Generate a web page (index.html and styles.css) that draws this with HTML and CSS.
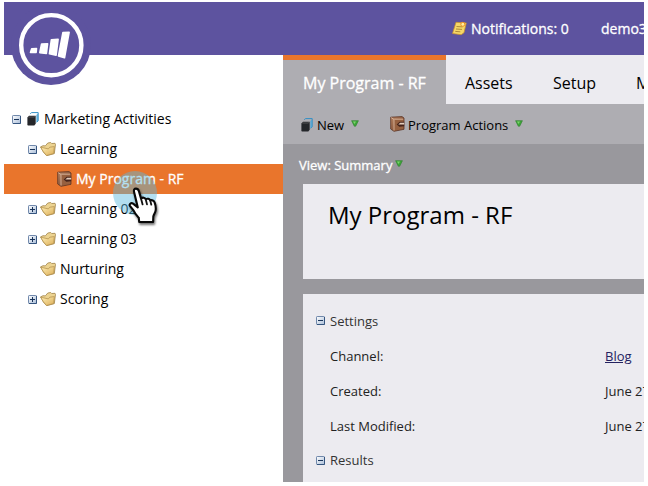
FILE: index.html
```html
<!DOCTYPE html>
<html lang="en">
<head>
<meta charset="utf-8">
<title>My Program - RF</title>
<link rel="stylesheet" href="styles.css">
</head>
<body>
<svg class="defs" width="0" height="0" aria-hidden="true">
  <defs>
    <linearGradient id="gFolder" x1="0" y1="0" x2="1" y2="1"><stop offset="0" stop-color="#fff0b8"/><stop offset="1" stop-color="#dcae58"/></linearGradient>
    <linearGradient id="gBox" x1="0" y1="0" x2="1" y2="1"><stop offset="0" stop-color="#fff"/><stop offset="1" stop-color="#a9bdd8"/></linearGradient>
    <linearGradient id="gBook" x1="0" y1="0" x2="1" y2="1"><stop offset="0" stop-color="#b98563"/><stop offset="1" stop-color="#6b3a22"/></linearGradient>
    <symbol id="minus" viewBox="0 0 9 9"><rect x=".5" y=".5" width="8" height="8" rx=".7" fill="url(#gBox)" stroke="#7088ab"/><path d="M1 8.5h7.5V1" fill="none" stroke="#35557f"/><path d="M2 4.5h5" stroke="#19345a"/></symbol>
    <symbol id="plus" viewBox="0 0 9 9"><rect x=".5" y=".5" width="8" height="8" rx=".7" fill="url(#gBox)" stroke="#7088ab"/><path d="M1 8.5h7.5V1" fill="none" stroke="#35557f"/><path d="M2 4.5h5M4.5 2v5" stroke="#19345a"/></symbol>
    <symbol id="folder" viewBox="0 0 16 14"><path d="M.6 4.9 3 3.7l2.3.2L7.8 1l2.9-.5 1 1 3.3-.2.5 1-1.2 9.3-7.5 2-3.1-3.2z" fill="#ecd391" stroke="#a08348" stroke-width=".8" stroke-linejoin="round"/><path d="M.6 5.2 8.4 6.9l1.4-1.7 4.5-.6-.6 7-7.3 1.9-3-3.7z" fill="url(#gFolder)" stroke="#b08c48" stroke-width=".7" stroke-linejoin="round"/></symbol>
    <symbol id="stack" viewBox="0 0 12 14"><path d="M3.2 1.7 4.6.6h6.6v8.2l-1.5 1.5" fill="none" stroke="#318fc5"/><path d="M9.4 3 10.9 1.6v7.5l-1.5 1.3z" fill="#4ba4d5"/><path d="M.4 5.4 2 3.7h6.7v8L7.3 13.6H1l-.6-.7z" fill="#24262a"/><path d="M1.3 5h5.8l1.1-.8" fill="none" stroke="#777" stroke-width=".6"/></symbol>
    <symbol id="book" viewBox="0 0 15 16"><path d="M.7 1.2 12 .6l2 1.4v11.3l-10 2L.7 13z" fill="url(#gBook)" stroke="#5a3425" stroke-width=".8"/><path d="M4 3.2 13.4 3v9.9L4 14.7z" fill="#96603f"/><path d="m1.2 1.6 2.8 1.9v11M4.2 3.2h9" fill="none" stroke="#dab79e" stroke-width=".9"/><path d="M14.2 5.8H9.7L6.7 8.4l2.6 2.4 4.9-.6z" fill="#45231a"/><path d="M14.2 6.7h-4L8.3 8.5h5.9z" fill="#e4cdbb"/></symbol>
    <symbol id="arrow" viewBox="0 0 8 7"><path d="M.6.7h6.8L4.7 6.2H3.3z" fill="#3ca637" stroke="#39853a" stroke-width=".7"/><path d="M2 1.6h3L3.5 4z" fill="#7ed36e"/></symbol>
  </defs>
</svg>
<div class="app">
  <header class="topbar">
    <svg class="logo" viewBox="0 0 80 80"><circle cx="40" cy="40" r="40" fill="#5d539f"/><circle cx="40.3" cy="40.2" r="30.1" fill="none" stroke="#fff" stroke-width="4.4"/><g fill="#fff" stroke="#fff" stroke-width="1.6" stroke-linejoin="round"><path d="m20.7 43.7 4.8-.2-.4 4-5.6-.1z"/><path d="m30.6 39 6-.3-1.2 9.8-6.6-.8z"/><path d="m40.4 34.7 6.7-.4-2 15.8-6.7-1.3z"/><path d="m51.9 27.6 6.2-.2-4.6 25.4-6-1.9z"/></g></svg>
    <div class="account">
      <svg class="note" width="15" height="15" viewBox="0 0 15 15"><path d="m4 1.3 10.3.6-2.3 9.8-2.8 2-8.7-1.2z" fill="#f5d767" stroke="#c98f26" stroke-width=".7"/><path d="m4.5 5.5 6 .4M4 8l6 .4M3.3 10.4l5 .4" stroke="#9c762d" stroke-width=".8"/><circle cx="10.8" cy="3.3" r="2" fill="#fff0a0" stroke="#f08c25"/></svg>
      <span class="notifications">Notifications: 0</span><span>demo3</span>
    </div>
  </header>
  <div class="body">
    <nav class="tree">
      <div class="row"><svg class="toggle"><use href="#minus"/></svg><svg class="stack"><use href="#stack"/></svg><span>Marketing Activities</span></div>
      <div class="row child"><svg class="toggle"><use href="#minus"/></svg><svg class="folder"><use href="#folder"/></svg><span>Learning</span></div>
      <div class="row selected"><svg class="book"><use href="#book"/></svg><span>My Program - RF</span></div>
      <div class="row child"><svg class="toggle"><use href="#plus"/></svg><svg class="folder"><use href="#folder"/></svg><span>Learning 02</span></div>
      <div class="row child"><svg class="toggle"><use href="#plus"/></svg><svg class="folder"><use href="#folder"/></svg><span>Learning 03</span></div>
      <div class="row child"><i class="toggle"></i><svg class="folder"><use href="#folder"/></svg><span>Nurturing</span></div>
      <div class="row child"><svg class="toggle"><use href="#plus"/></svg><svg class="folder"><use href="#folder"/></svg><span>Scoring</span></div>
    </nav>
    <main class="main">
      <div class="tabs"><div class="tab active">My Program - RF</div><div class="tab">Assets</div><div class="tab setup">Setup</div><div class="tab">M</div></div>
      <div class="toolbar"><svg class="stack"><use href="#stack"/></svg><span class="new">New</span><svg class="arrow"><use href="#arrow"/></svg><svg class="book large"><use href="#book"/></svg><span class="actions">Program Actions</span><svg class="arrow"><use href="#arrow"/></svg></div>
      <div class="view"><span>View: Summary</span><svg class="arrow"><use href="#arrow"/></svg></div>
      <section class="card title"><h1>My Program - RF</h1></section>
      <section class="card details">
        <div class="section"><svg class="toggle"><use href="#minus"/></svg>Settings</div>
        <div class="field"><span>Channel:</span><a>Blog</a></div>
        <div class="field"><span>Created:</span><b>June 27</b></div>
        <div class="field"><span>Last Modified:</span><b>June 27</b></div>
        <div class="section results"><svg class="toggle"><use href="#minus"/></svg>Results</div>
      </section>
    </main>
  </div>
  <svg class="pointer" width="60" height="66" viewBox="0 0 60 66"><circle cx="24" cy="24" r="22" fill="#59b9df" fill-opacity=".46"/><path class="hand" d="M23.2 23.5C22.4 20.8 23.4 19.6 25 19.6c1.5 0 2.4.9 2.9 2.5l2.1 7.3c1.6-1.3 4-.8 4.7.8 1.7-1 3.8-.4 4.5 1.2 1.8-.7 3.7.1 4.4 1.9 1 2.8 1.5 5.6 1 8.3-.4 2.3-2 4-2.3 6.1l-.2 5.3H28.2l-.4-4.2c-2-2.3-4.1-4.5-5.3-7.5l-3.4-4.1c-1.4-1.8.9-3.9 3-2.6l4.7 3.8z" fill="#fff" stroke="#080808" stroke-width="2.1" stroke-linejoin="round"/><path d="m30 29.4 1.6 6M34.7 30.3l1.3 5.1M39.2 31.4l1.1 4.3" fill="none" stroke="#111" stroke-width="1.8" stroke-linecap="round"/></svg>
</div>
</body>
</html>
```
FILE: styles.css
```css
* { box-sizing: border-box; }
body { margin: 0; width: 648px; height: 486px; overflow: hidden; background: #fff; font-family: "Open Sans", sans-serif; font-size: 14px; color: #000; }
svg { display: block; flex: none; }
.defs { position: absolute; }
.app { position: relative; margin: 2px 4px 4px; width: 640px; height: 480px; overflow: hidden; }
.topbar { position: relative; height: 53px; background: #5d539f; color: #fff; }
.logo { position: absolute; z-index: 2; left: 6.5px; top: 2.5px; width: 80px; height: 80px; }
.account { display: flex; align-items: center; height: 53px; padding-left: 448px; white-space: nowrap; }
.note { margin-right: 4px; }
.notifications { width: 130px; flex: none; }
.account, .selected, .tab.active, .view { -webkit-text-stroke: .3px #fff; }
.body { display: flex; height: 427px; }
.tree { width: 279px; flex: none; padding-top: 49px; }
.row { display: flex; align-items: center; height: 30px; padding-left: 8px; white-space: nowrap; }
.row span { line-height: 20px; }
.child { padding-left: 24px; }
.selected { background: #e9752c; color: #fff; padding-left: 53px; }
.toggle { width: 9px; height: 9px; flex: none; }
.stack { width: 12px; height: 14px; }
.row .stack { margin: 0 5px 0 6px; }
.folder { width: 16px; height: 14px; margin: 0 4px 0 3px; }
.book { width: 15px; height: 16px; }
.row .book { margin-right: 4px; }
.main { width: 361px; flex: none; overflow: hidden; background: #99989d; }
.tabs { display: flex; height: 49px; background: #ecebf0; font-size: 16px; line-height: 56px; white-space: nowrap; }
.tab { flex: none; width: 88px; padding-left: 19px; }
.tab.setup { width: 83px; }
.tab.active { width: 163px; border-top: 5px solid #e9752c; background: #aeadb2; color: #fff; padding-left: 20px; line-height: 46px; }
.toolbar { display: flex; align-items: center; height: 40px; padding: 1px 0 0 18px; background: #aeadb2; font-size: 13px; white-space: nowrap; }
.new { width: 34px; margin-left: 4px; }
.arrow { width: 8px; height: 7px; position: relative; top: -1px; }
.book.large { margin-left: 31px; position: relative; top: -1px; }
.actions { width: 107px; margin-left: 3px; }
.view { display: flex; align-items: center; height: 40px; padding: 1px 0 0 16px; color: #fff; font-size: 13px; }
.view .arrow { margin-left: 3px; }
.card { margin-left: 20px; background: #ecebf0; }
.title { height: 95px; padding: 14px 0 0 25px; }
h1 { margin: 0; font-size: 24px; line-height: 33px; font-weight: 400; }
.details { margin-top: 15px; height: 188px; padding: 9px 0 0 13px; font-size: 13px; color: #333; }
.section { display: flex; align-items: center; height: 35px; }
.section .toggle { margin-right: 5px; }
.results { height: 34px; }
.field { display: flex; align-items: center; height: 35px; padding-left: 14px; color: #222; white-space: nowrap; }
.field span { width: 275px; flex: none; }
.field b { font-weight: 400; }
.field a { color: #242260; text-decoration: underline; }
.pointer { position: absolute; z-index: 3; left: 107px; top: 167px; }
.hand { filter: drop-shadow(1px 2px 1px rgb(0 0 0 / .55)); }
```
